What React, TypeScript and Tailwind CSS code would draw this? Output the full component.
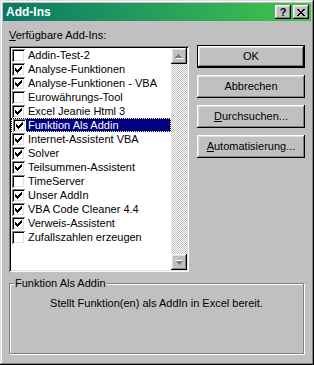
const addins: [string, boolean][] = [
  ["Addin-Test-2", false],
  ["Analyse-Funktionen", true],
  ["Analyse-Funktionen - VBA", true],
  ["Eurowährungs-Tool", false],
  ["Excel Jeanie Html 3", true],
  ["Funktion Als Addin", true],
  ["Internet-Assistent VBA", true],
  ["Solver", true],
  ["Teilsummen-Assistent", true],
  ["TimeServer", false],
  ["Unser AddIn", true],
  ["VBA Code Cleaner 4.4", true],
  ["Verweis-Assistent", true],
  ["Zufallszahlen erzeugen", false],
];

const raised =
  "shadow-[inset_-1px_-1px_#000,inset_1px_1px_#fff,inset_-2px_-2px_#808080,inset_2px_2px_#dfdfdf]";
const sunken =
  "shadow-[inset_1px_1px_#808080,inset_-1px_-1px_#fff,inset_2px_2px_#000,inset_-2px_-2px_#dfdfdf]";

function CheckBox({ on }: { on: boolean }) {
  return (
    <span className={`w-[13px] h-[13px] bg-white flex items-center justify-center shrink-0 ${sunken}`}>
      {on && (
        <svg width="7" height="7" viewBox="0 0 7 7" shapeRendering="crispEdges">
          <path
            d="M0 2h1v3H0z M1 3h1v3H1z M2 4h1v3H2z M3 3h1v3H3z M4 2h1v3H4z M5 1h1v3H5z M6 0h1v3H6z"
            fill="#000"
          />
        </svg>
      )}
    </span>
  );
}

function ScrollArrow({ down }: { down?: boolean }) {
  return (
    <div className={`w-[16px] h-[16px] bg-[#c0c0c0] flex items-center justify-center ${raised}`}>
      <svg width="8" height="5" viewBox="0 0 8 5" shapeRendering="crispEdges" className={down ? "rotate-180" : ""}>
        <path d="M4 1h1v1H4z M3 2h3v1H3z M2 3h5v1H2z M1 4h7v1H1z" fill="#fff" />
        <path d="M3 0h1v1H3z M2 1h3v1H2z M1 2h5v1H1z M0 3h7v1H0z" fill="#808080" />
      </svg>
    </div>
  );
}

function Button({ children, isDefault }: { children: React.ReactNode; isDefault?: boolean }) {
  if (isDefault) {
    return (
      <div className="h-[23px] border border-black">
        <div className={`h-full bg-[#c0c0c0] flex items-center justify-center ${raised}`}>{children}</div>
      </div>
    );
  }
  return <div className={`h-[23px] bg-[#c0c0c0] flex items-center justify-center ${raised}`}>{children}</div>;
}

export default function App() {
  return (
    <div className="w-[314px] h-[365px] bg-[#c0c0c0] p-[3px] flex flex-col text-[11px] leading-[13px] text-black font-['Liberation_Sans',Arial,sans-serif] shadow-[inset_-1px_-1px_#000,inset_1px_1px_#dfdfdf,inset_-2px_-2px_#808080,inset_2px_2px_#fff]">
      {/* title bar */}
      <div className="h-[18px] bg-linear-to-r from-[#0a7866] to-[#42c642] flex items-center justify-between pl-[3px] pr-[2px]">
        <span className="font-bold text-white text-[12px]">Add-Ins</span>
        <div className="flex gap-[2px]">
          <div className={`w-[16px] h-[14px] bg-[#c0c0c0] flex items-center justify-center font-bold text-[11px] leading-none ${raised}`}>
            ?
          </div>
          <div className={`w-[16px] h-[14px] bg-[#c0c0c0] flex items-center justify-center ${raised}`}>
            <svg width="8" height="7" viewBox="0 0 8 7" shapeRendering="crispEdges">
              <path
                d="M0 0h2v1H0z M6 0h2v1H6z M1 1h2v1H1z M5 1h2v1H5z M2 2h4v1H2z M3 3h2v1H3z M2 4h4v1H2z M1 5h2v1H1z M5 5h2v1H5z M0 6h2v1H0z M6 6h2v1H6z"
                fill="#000"
              />
            </svg>
          </div>
        </div>
      </div>

      <div className="px-[6px] pt-[8px] flex flex-col">
        <p>
          <span className="underline">V</span>erfügbare Add-Ins:
        </p>

        <div className="mt-[3px] flex gap-[8px]">
          {/* list */}
          <div className={`mt-[1px] w-[180px] h-[226px] bg-white p-[2px] flex ${sunken}`}>
            <div className="flex-1 flex flex-col">
              {addins.map(([name, on]) => {
                const sel = name === "Funktion Als Addin";
                return (
                  <div key={name} className="h-[14px] flex">
                    <span
                      className={`w-[15px] pl-[1px] flex items-center ${
                        sel ? "border-l border-y border-dotted border-black pl-0" : ""
                      }`}
                    >
                      <CheckBox on={on} />
                    </span>
                    <span
                      className={`flex-1 pl-[2px] flex items-center whitespace-nowrap ${
                        sel ? "bg-[#000080] text-white border-y border-r border-dotted border-[#ffff80]" : ""
                      }`}
                    >
                      {name}
                    </span>
                  </div>
                );
              })}
            </div>
            <div className="w-[16px] flex flex-col">
              <ScrollArrow />
              <div className="flex-1 bg-[conic-gradient(#c0c0c0_25%,#fff_0_50%,#c0c0c0_0_75%,#fff_0)] bg-[length:2px_2px]" />
              <ScrollArrow down />
            </div>
          </div>

          {/* buttons */}
          <div className="w-[108px] flex flex-col gap-[7px]">
            <Button isDefault>OK</Button>
            <Button>Abbrechen</Button>
            <Button>
              <span>
                <span className="underline">D</span>urchsuchen...
              </span>
            </Button>
            <Button>
              <span>
                <span className="underline">A</span>utomatisierung...
              </span>
            </Button>
          </div>
        </div>

        <fieldset className="mt-[5px] h-[77px] border border-[#808080] shadow-[inset_1px_1px_#fff,1px_1px_#fff] px-[2px] mr-[1px]">
          <legend className="ml-[2px] px-[1px] bg-[#c0c0c0]">Funktion Als Addin</legend>
          <p className="pt-[7px] text-center">Stellt Funktion(en) als AddIn in Excel bereit.</p>
        </fieldset>
      </div>
    </div>
  );
}
